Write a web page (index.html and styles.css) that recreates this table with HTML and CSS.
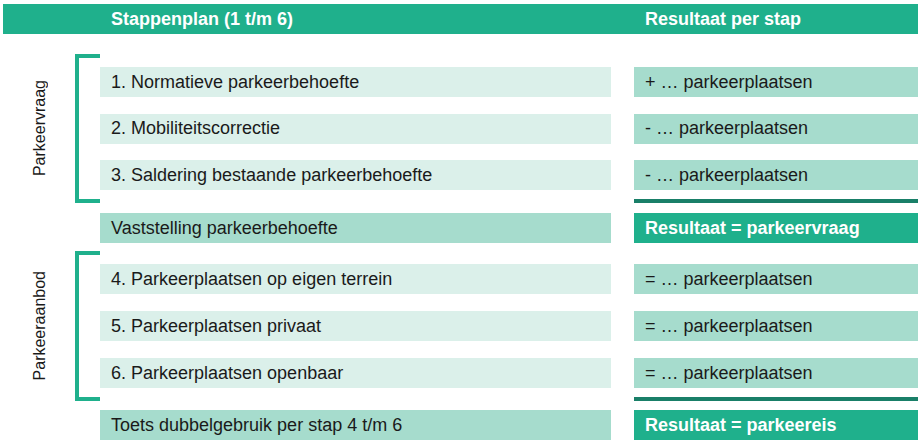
FILE: index.html
```html
<!DOCTYPE html>
<html>
<head>
<meta charset="utf-8">
<link rel="stylesheet" href="styles.css">
</head>
<body>
<div class="page">
  <div class="header">
    <div class="hcell hleft">Stappenplan (1 t/m 6)</div>
    <div class="hcell hright">Resultaat per stap</div>
  </div>

  <div class="group g1">
    <div class="label"><span>Parkeervraag</span></div>
    <div class="bracket"></div>
    <div class="rows">
      <div class="row"><div class="cell light">1. Normatieve parkeerbehoefte</div><div class="cell mid res">+ … parkeerplaatsen</div></div>
      <div class="row"><div class="cell light">2. Mobiliteitscorrectie</div><div class="cell mid res">- … parkeerplaatsen</div></div>
      <div class="row"><div class="cell light">3. Saldering bestaande parkeerbehoefte</div><div class="cell mid res">- … parkeerplaatsen</div></div>
      <div class="line"><div class="spacer"></div><div class="dark"></div></div>
    </div>
  </div>

  <div class="row summary s1">
    <div class="cell mid">Vaststelling parkeerbehoefte</div>
    <div class="cell strong res">Resultaat = parkeervraag</div>
  </div>

  <div class="group g2">
    <div class="label"><span>Parkeeraanbod</span></div>
    <div class="bracket"></div>
    <div class="rows">
      <div class="row"><div class="cell light">4. Parkeerplaatsen op eigen terrein</div><div class="cell mid res">= … parkeerplaatsen</div></div>
      <div class="row"><div class="cell light">5. Parkeerplaatsen privaat</div><div class="cell mid res">= … parkeerplaatsen</div></div>
      <div class="row"><div class="cell light">6. Parkeerplaatsen openbaar</div><div class="cell mid res">= … parkeerplaatsen</div></div>
      <div class="line"><div class="spacer"></div><div class="dark"></div></div>
    </div>
  </div>

  <div class="row summary s2">
    <div class="cell mid">Toets dubbelgebruik per stap 4 t/m 6</div>
    <div class="cell strong res">Resultaat = parkeereis</div>
  </div>
</div>
</body>
</html>
```

FILE: styles.css
```css
html, body {
  margin: 0;
  padding: 0;
  background: #ffffff;
}

body {
  font-family: "Liberation Sans", Arial, sans-serif;
  font-size: 18px;
  color: #1a1a1a;
}

.page {
  width: 918px;
  display: flex;
  flex-direction: column;
  padding-top: 4px;
}

.header {
  margin-left: 3px;
  height: 30px;
  background: #1fb08c;
  color: #ffffff;
  font-weight: bold;
  display: grid;
  grid-template-columns: 631px 1fr;
  align-items: center;
}

.hleft { padding-left: 108px; }
.hright { padding-left: 11px; }

.group {
  display: flex;
}

.g1 { margin-top: 20px; }
.g2 { margin-top: 8px; }

.label {
  width: 75px;
  display: flex;
  align-items: center;
  justify-content: center;
  padding-left: 4px;
  box-sizing: border-box;
  font-size: 16px;
}

.label span {
  writing-mode: vertical-rl;
  transform: rotate(180deg);
  white-space: nowrap;
}

.bracket {
  width: 21px;
  border: 4px solid #1fb08c;
  border-right: none;
}

.rows {
  display: flex;
  flex-direction: column;
  padding-top: 13px;
}

.g1 .rows { gap: 16.5px; }
.g2 .rows { gap: 17px; }

.row {
  display: flex;
  gap: 23px;
  height: 30px;
}

.cell {
  width: 511px;
  box-sizing: border-box;
  padding-left: 11px;
  display: flex;
  align-items: center;
}

.cell.res {
  width: 284px;
  padding-left: 11px;
}

.light { background: #dbf0ea; }
.mid { background: #a6dccd; }
.strong {
  background: #1fb08c;
  color: #ffffff;
  font-weight: bold;
}

.line {
  display: flex;
  gap: 23px;
  height: 4px;
  margin-top: -7.5px;
}

.g2 .line { margin-top: -8px; }

.line .spacer { width: 511px; }
.line .dark { width: 284px; background: #197f68; }

.summary { margin-left: 100px; }
.s1 { margin-top: 10px; }
.s2 { margin-top: 9px; }
```
